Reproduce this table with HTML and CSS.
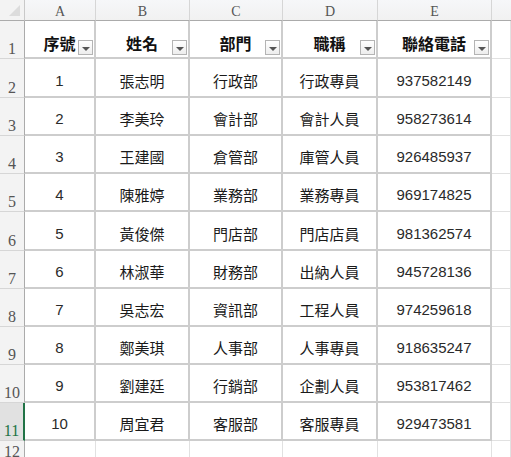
FILE: index.html
```html
<!DOCTYPE html>
<html lang="zh-Hant">
<head>
<meta charset="utf-8">
<link rel="stylesheet" href="styles.css">
</head>
<body>
<div class="sheet">
  <div class="corner"><span class="tri"></span></div>
  <div class="ch">A</div><div class="ch">B</div><div class="ch">C</div><div class="ch">D</div><div class="ch">E</div><div class="ch last"></div>

  <div class="rh">1</div>
  <div class="c hd">序號<span class="dd"></span></div>
  <div class="c hd">姓名<span class="dd"></span></div>
  <div class="c hd">部門<span class="dd"></span></div>
  <div class="c hd">職稱<span class="dd"></span></div>
  <div class="c hd">聯絡電話<span class="dd"></span></div>
  <div class="g"></div>

  <div class="rh">2</div><div class="c num">1</div><div class="c">張志明</div><div class="c">行政部</div><div class="c">行政專員</div><div class="c num">937582149</div><div class="g"></div>
  <div class="rh">3</div><div class="c num">2</div><div class="c">李美玲</div><div class="c">會計部</div><div class="c">會計人員</div><div class="c num">958273614</div><div class="g"></div>
  <div class="rh">4</div><div class="c num">3</div><div class="c">王建國</div><div class="c">倉管部</div><div class="c">庫管人員</div><div class="c num">926485937</div><div class="g"></div>
  <div class="rh">5</div><div class="c num">4</div><div class="c">陳雅婷</div><div class="c">業務部</div><div class="c">業務專員</div><div class="c num">969174825</div><div class="g"></div>
  <div class="rh">6</div><div class="c num">5</div><div class="c">黃俊傑</div><div class="c">門店部</div><div class="c">門店店員</div><div class="c num">981362574</div><div class="g"></div>
  <div class="rh">7</div><div class="c num">6</div><div class="c">林淑華</div><div class="c">財務部</div><div class="c">出納人員</div><div class="c num">945728136</div><div class="g"></div>
  <div class="rh">8</div><div class="c num">7</div><div class="c">吳志宏</div><div class="c">資訊部</div><div class="c">工程人員</div><div class="c num">974259618</div><div class="g"></div>
  <div class="rh">9</div><div class="c num">8</div><div class="c">鄭美琪</div><div class="c">人事部</div><div class="c">人事專員</div><div class="c num">918635247</div><div class="g"></div>
  <div class="rh">10</div><div class="c num">9</div><div class="c">劉建廷</div><div class="c">行銷部</div><div class="c">企劃人員</div><div class="c num">953817462</div><div class="g"></div>
  <div class="rh sel">11</div><div class="c num">10</div><div class="c">周宜君</div><div class="c">客服部</div><div class="c">客服專員</div><div class="c num">929473581</div><div class="g"></div>

  <div class="rh">12</div><div class="g"></div><div class="g"></div><div class="g"></div><div class="g"></div><div class="g"></div><div class="g"></div>
</div>
</body>
</html>
```

FILE: styles.css
```css
html, body {
  margin: 0;
  padding: 0;
  background: #ffffff;
  overflow: hidden;
}

.sheet {
  display: grid;
  grid-template-columns: 25px 71px 94px 93px 95px 114px 1fr;
  grid-template-rows: 21px 38px 39px 38px 38px 38px 39px 38px 38px 38px 38px 38px 21px;
  width: 511px;
  height: 457px;
  overflow: hidden;
  font-family: "Noto Sans CJK TC", "Noto Sans", sans-serif;
  color: #1a1a1a;
}

.sheet > div {
  box-sizing: border-box;
  position: relative;
}

.corner {
  background: #f3f3f3;
  border-right: 1px solid #c9c9c9;
  border-bottom: 1px solid #ababab;
}

.corner .tri {
  position: absolute;
  right: 4px;
  bottom: 4px;
  width: 0;
  height: 0;
  border-left: 11px solid transparent;
  border-bottom: 11px solid #dcdcdc;
}

.ch {
  background: linear-gradient(#f6f7f9, #f1f1f1);
  border-right: 1px solid #d6d6d6;
  border-bottom: 1px solid #ababab;
  display: flex;
  align-items: center;
  justify-content: center;
  font-family: "Liberation Serif", serif;
  font-size: 14px;
  color: #555;
  padding-top: 3px;
}

.ch.last {
  border-right: none;
}

.rh {
  background: #f3f3f3;
  border-right: 1px solid #ababab;
  border-bottom: 1px solid #d6d6d6;
  display: flex;
  align-items: flex-end;
  justify-content: center;
  font-family: "Liberation Serif", serif;
  font-size: 16px;
  line-height: 16px;
  color: #555;
  padding-bottom: 1px;
}

.rh.sel {
  background: #e1e1e1;
  color: #217346;
  border-right: 2px solid #217346;
}

.c {
  border-right: 2px solid #cdcdcd;
  border-bottom: 2px solid #cdcdcd;
  display: flex;
  align-items: center;
  justify-content: center;
  font-size: 15px;
  padding-top: 5px;
}

.c.num {
  font-family: "Liberation Sans", sans-serif;
  font-size: 15px;
  color: #2a2a2a;
}

.c.hd {
  font-weight: bold;
  font-size: 16px;
  padding-top: 8px;
  color: #111;
}

.dd {
  position: absolute;
  right: 1px;
  bottom: 2px;
  width: 15px;
  height: 15px;
  box-sizing: border-box;
  border: 1px solid #b4b4b4;
  background: linear-gradient(#ffffff, #eeeeee);
}

.dd::after {
  content: "";
  position: absolute;
  left: 3px;
  top: 6px;
  width: 0;
  height: 0;
  border-left: 4px solid transparent;
  border-right: 4px solid transparent;
  border-top: 4px solid #555;
}

.g {
  border-bottom: 1px solid #e1e1e1;
  border-right: 1px solid #e1e1e1;
}
```
